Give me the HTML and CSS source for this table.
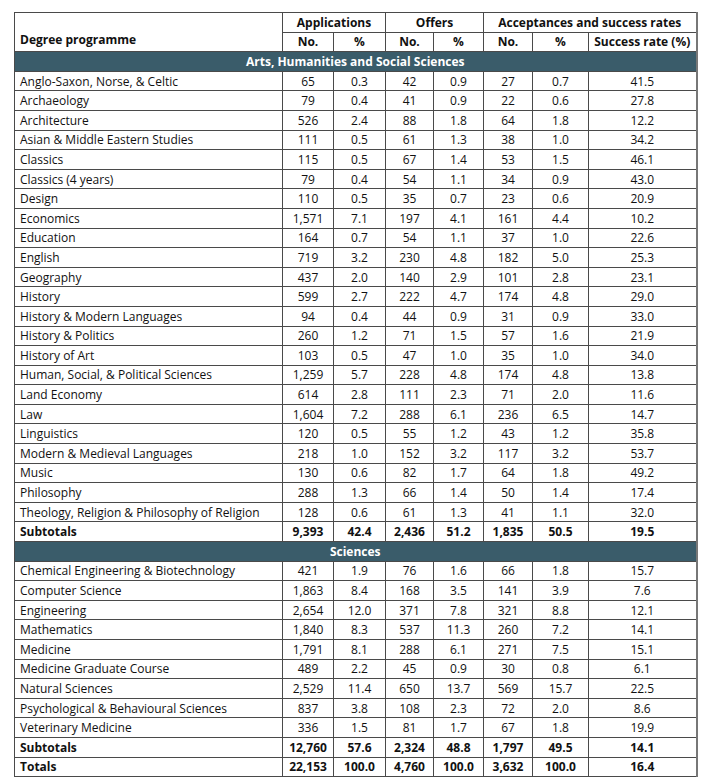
FILE: index.html
```html
<!DOCTYPE html>
<html>
<head>
<meta charset="utf-8">
<link rel="stylesheet" href="styles.css">
</head>
<body>
<table class="stats">
<colgroup>
<col class="c-name"><col class="c-n1"><col class="c-p1"><col class="c-n2"><col class="c-p2"><col class="c-n3"><col class="c-p3"><col class="c-rate">
</colgroup>
<thead>
<tr><th rowspan="2" class="name-head">Degree programme</th><th colspan="2">Applications</th><th colspan="2">Offers</th><th colspan="3">Acceptances and success rates</th></tr>
<tr><th>No.</th><th>%</th><th>No.</th><th>%</th><th>No.</th><th>%</th><th>Success rate (%)</th></tr>
</thead>
<tbody>
<tr class="section"><td colspan="8">Arts, Humanities and Social Sciences</td></tr>
<tr><td>Anglo-Saxon, Norse, &amp; Celtic</td><td>65</td><td>0.3</td><td>42</td><td>0.9</td><td>27</td><td>0.7</td><td>41.5</td></tr>
<tr><td>Archaeology</td><td>79</td><td>0.4</td><td>41</td><td>0.9</td><td>22</td><td>0.6</td><td>27.8</td></tr>
<tr><td>Architecture</td><td>526</td><td>2.4</td><td>88</td><td>1.8</td><td>64</td><td>1.8</td><td>12.2</td></tr>
<tr><td>Asian &amp; Middle Eastern Studies</td><td>111</td><td>0.5</td><td>61</td><td>1.3</td><td>38</td><td>1.0</td><td>34.2</td></tr>
<tr><td>Classics</td><td>115</td><td>0.5</td><td>67</td><td>1.4</td><td>53</td><td>1.5</td><td>46.1</td></tr>
<tr><td>Classics (4 years)</td><td>79</td><td>0.4</td><td>54</td><td>1.1</td><td>34</td><td>0.9</td><td>43.0</td></tr>
<tr><td>Design</td><td>110</td><td>0.5</td><td>35</td><td>0.7</td><td>23</td><td>0.6</td><td>20.9</td></tr>
<tr><td>Economics</td><td>1,571</td><td>7.1</td><td>197</td><td>4.1</td><td>161</td><td>4.4</td><td>10.2</td></tr>
<tr><td>Education</td><td>164</td><td>0.7</td><td>54</td><td>1.1</td><td>37</td><td>1.0</td><td>22.6</td></tr>
<tr><td>English</td><td>719</td><td>3.2</td><td>230</td><td>4.8</td><td>182</td><td>5.0</td><td>25.3</td></tr>
<tr><td>Geography</td><td>437</td><td>2.0</td><td>140</td><td>2.9</td><td>101</td><td>2.8</td><td>23.1</td></tr>
<tr><td>History</td><td>599</td><td>2.7</td><td>222</td><td>4.7</td><td>174</td><td>4.8</td><td>29.0</td></tr>
<tr><td>History &amp; Modern Languages</td><td>94</td><td>0.4</td><td>44</td><td>0.9</td><td>31</td><td>0.9</td><td>33.0</td></tr>
<tr><td>History &amp; Politics</td><td>260</td><td>1.2</td><td>71</td><td>1.5</td><td>57</td><td>1.6</td><td>21.9</td></tr>
<tr><td>History of Art</td><td>103</td><td>0.5</td><td>47</td><td>1.0</td><td>35</td><td>1.0</td><td>34.0</td></tr>
<tr><td>Human, Social, &amp; Political Sciences</td><td>1,259</td><td>5.7</td><td>228</td><td>4.8</td><td>174</td><td>4.8</td><td>13.8</td></tr>
<tr><td>Land Economy</td><td>614</td><td>2.8</td><td>111</td><td>2.3</td><td>71</td><td>2.0</td><td>11.6</td></tr>
<tr><td>Law</td><td>1,604</td><td>7.2</td><td>288</td><td>6.1</td><td>236</td><td>6.5</td><td>14.7</td></tr>
<tr><td>Linguistics</td><td>120</td><td>0.5</td><td>55</td><td>1.2</td><td>43</td><td>1.2</td><td>35.8</td></tr>
<tr><td>Modern &amp; Medieval Languages</td><td>218</td><td>1.0</td><td>152</td><td>3.2</td><td>117</td><td>3.2</td><td>53.7</td></tr>
<tr><td>Music</td><td>130</td><td>0.6</td><td>82</td><td>1.7</td><td>64</td><td>1.8</td><td>49.2</td></tr>
<tr><td>Philosophy</td><td>288</td><td>1.3</td><td>66</td><td>1.4</td><td>50</td><td>1.4</td><td>17.4</td></tr>
<tr><td>Theology, Religion &amp; Philosophy of Religion</td><td>128</td><td>0.6</td><td>61</td><td>1.3</td><td>41</td><td>1.1</td><td>32.0</td></tr>
<tr class="total"><td>Subtotals</td><td>9,393</td><td>42.4</td><td>2,436</td><td>51.2</td><td>1,835</td><td>50.5</td><td>19.5</td></tr>
<tr class="section"><td colspan="8">Sciences</td></tr>
<tr><td>Chemical Engineering &amp; Biotechnology</td><td>421</td><td>1.9</td><td>76</td><td>1.6</td><td>66</td><td>1.8</td><td>15.7</td></tr>
<tr><td>Computer Science</td><td>1,863</td><td>8.4</td><td>168</td><td>3.5</td><td>141</td><td>3.9</td><td>7.6</td></tr>
<tr><td>Engineering</td><td>2,654</td><td>12.0</td><td>371</td><td>7.8</td><td>321</td><td>8.8</td><td>12.1</td></tr>
<tr><td>Mathematics</td><td>1,840</td><td>8.3</td><td>537</td><td>11.3</td><td>260</td><td>7.2</td><td>14.1</td></tr>
<tr><td>Medicine</td><td>1,791</td><td>8.1</td><td>288</td><td>6.1</td><td>271</td><td>7.5</td><td>15.1</td></tr>
<tr><td>Medicine Graduate Course</td><td>489</td><td>2.2</td><td>45</td><td>0.9</td><td>30</td><td>0.8</td><td>6.1</td></tr>
<tr><td>Natural Sciences</td><td>2,529</td><td>11.4</td><td>650</td><td>13.7</td><td>569</td><td>15.7</td><td>22.5</td></tr>
<tr><td>Psychological &amp; Behavioural Sciences</td><td>837</td><td>3.8</td><td>108</td><td>2.3</td><td>72</td><td>2.0</td><td>8.6</td></tr>
<tr><td>Veterinary Medicine</td><td>336</td><td>1.5</td><td>81</td><td>1.7</td><td>67</td><td>1.8</td><td>19.9</td></tr>
<tr class="total"><td>Subtotals</td><td>12,760</td><td>57.6</td><td>2,324</td><td>48.8</td><td>1,797</td><td>49.5</td><td>14.1</td></tr>
<tr class="total"><td>Totals</td><td>22,153</td><td>100.0</td><td>4,760</td><td>100.0</td><td>3,632</td><td>100.0</td><td>16.4</td></tr>
</tbody>
</table>
</body>
</html>
```
FILE: styles.css
```css
html, body {
  margin: 0;
  padding: 0;
  background: #ffffff;
}

body {
  padding: 12px 0 0 14px;
  font-family: "Open Sans", "DejaVu Sans", sans-serif;
  font-size: 12px;
  color: #111111;
}

.stats {
  border-collapse: collapse;
  table-layout: fixed;
  width: 682px;
  border-right: 2px solid #777;
}

.c-name { width: 268px; }
.c-n1 { width: 51px; }
.c-p1 { width: 52px; }
.c-n2 { width: 48px; }
.c-p2 { width: 50px; }
.c-n3 { width: 49px; }
.c-p3 { width: 56px; }
.c-rate { width: 108px; }

.stats tr {
  height: 19.6px;
}

.stats th,
.stats td {
  border: 1px solid #4a4a4a;
  padding: 0 2px;
  line-height: 17px;
  text-align: center;
  white-space: nowrap;
  overflow: hidden;
}

.stats th {
  font-weight: 700;
}

.stats th.name-head {
  text-align: left;
  vertical-align: bottom;
  padding-left: 5px;
  padding-bottom: 3px;
}

.stats td:first-child {
  text-align: left;
  padding-left: 5px;
}

.stats tr.section td {
  background: #3a5c6a;
  color: #ffffff;
  font-weight: 700;
  text-align: center;
  padding-left: 2px;
}

.stats tr.total td {
  font-weight: 700;
}
```
